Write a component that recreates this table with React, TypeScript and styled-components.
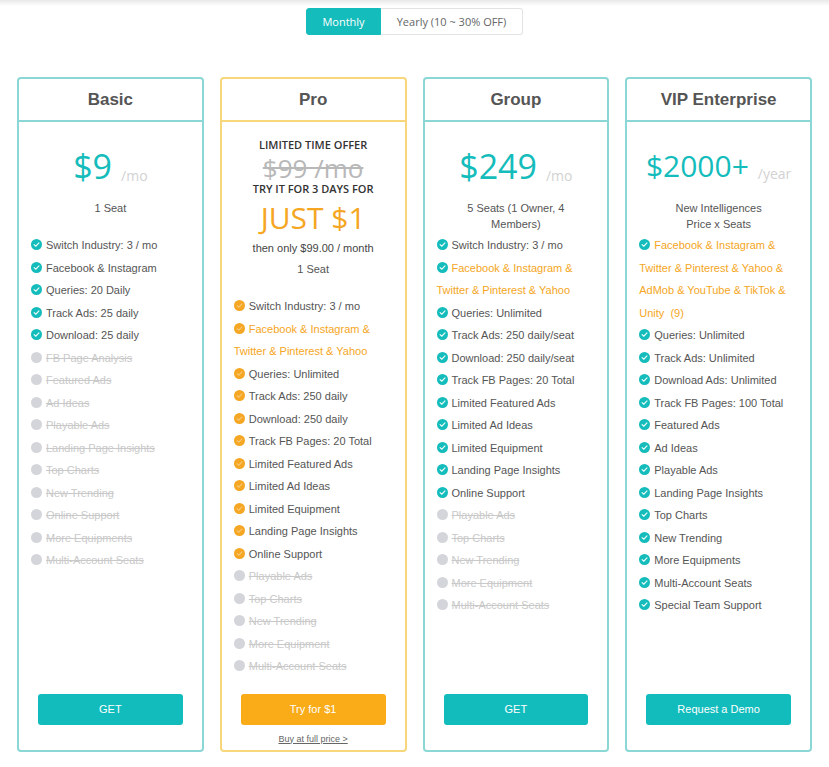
import styled, { createGlobalStyle } from "styled-components";

const GlobalStyle = createGlobalStyle`
  body {
    margin: 0;
    background: #fff;
    font-family: "Liberation Sans", Arial, sans-serif;
    color: #555;
  }
`;

const TEAL = "#14bcbb";
const ORANGE = "#f5a623";

const Page = styled.div`
  width: 829px;
`;

const TopShade = styled.div`
  height: 6px;
  background: linear-gradient(rgba(0, 0, 0, 0.09), rgba(0, 0, 0, 0));
`;

const Toggle = styled.div`
  display: flex;
  justify-content: center;
  margin-top: 2px;
`;

const Segment = styled.button<{ $active?: boolean }>`
  height: 27px;
  padding: 0 15px;
  font-family: "Open Sans", sans-serif;
  font-size: 11px;
  cursor: pointer;
  border: 1px solid ${(p) => (p.$active ? TEAL : "#e3e3e3")};
  background: ${(p) => (p.$active ? TEAL : "#fff")};
  color: ${(p) => (p.$active ? "#fff" : "#666")};
  border-radius: ${(p) => (p.$active ? "3px 0 0 3px" : "0 3px 3px 0")};
  ${(p) => (p.$active ? "width: 75px;" : "width: 142px; border-left: none;")}
`;

const Grid = styled.div`
  display: grid;
  grid-template-columns: repeat(4, 1fr);
  gap: 16px;
  padding: 0 17px;
  margin-top: 42px;
`;

const Card = styled.div<{ $pro?: boolean }>`
  display: flex;
  flex-direction: column;
  border: 2px solid ${(p) => (p.$pro ? "#f8d77c" : "#8ad7d5")};
  border-radius: 4px;
  background: #fff;
`;

const CardHead = styled.div<{ $pro?: boolean }>`
  height: 41px;
  display: flex;
  align-items: center;
  justify-content: center;
  border-bottom: 2px solid ${(p) => (p.$pro ? "#f8d77c" : "#8ad7d5")};
  font-size: 17px;
  font-weight: bold;
  color: #555;
`;

const Body = styled.div`
  flex: 1;
  display: flex;
  flex-direction: column;
  padding-top: 15px;
  text-align: center;
`;

const PriceRow = styled.div`
  margin-top: 9px;
  height: 40px;
  line-height: 40px;
  font-family: "Open Sans", sans-serif;
`;

const Amount = styled.span<{ $size: number }>`
  font-size: ${(p) => p.$size}px;
  color: ${TEAL};
`;

const Per = styled.span`
  font-size: 14px;
  color: #d2d2d2;
  margin-left: 9px;
  position: relative;
  top: 2px;
`;

const OfferLabel = styled.div`
  font-family: "Open Sans", sans-serif;
  font-weight: 600;
  font-size: 11px;
  line-height: 16px;
  color: #333;
`;

const OldPrice = styled.div`
  font-family: "Open Sans", sans-serif;
  font-size: 26px;
  line-height: 24px;
  margin: 3px 0;
  color: #b8b8b8;
  text-decoration: line-through;
`;

const TryLine = styled(OfferLabel)`
  line-height: 12px;
`;

const BigOffer = styled.div`
  font-family: "Open Sans", sans-serif;
  font-size: 30px;
  line-height: 44px;
  margin-top: 1px;
  color: ${ORANGE};
`;

const ThenLine = styled.div`
  font-size: 11px;
  line-height: 16px;
  color: #444;
`;

const SeatNote = styled.div<{ $gap: number }>`
  margin-top: ${(p) => p.$gap}px;
  min-height: 32px;
  font-size: 11px;
  line-height: 16px;
  color: #555;
  padding: 0 30px;
`;

const Features = styled.ul`
  flex: 1;
  list-style: none;
  margin: 2px 0 16px;
  padding: 0 11px 0 12px;
  text-align: left;
`;

const Feature = styled.li<{ $off?: boolean; $hl?: boolean }>`
  font-size: 11px;
  line-height: 22.5px;
  color: ${(p) => (p.$off ? "#c9c9c9" : p.$hl ? ORANGE : "#555")};
  text-decoration: ${(p) => (p.$off ? "line-through" : "none")};
`;

const Dot = styled.svg`
  width: 11px;
  height: 11px;
  vertical-align: -1px;
  margin-right: 4px;
`;

const Footer = styled.div`
  padding: 0 19px;
  text-align: center;
`;

const CTA = styled.button<{ $pro?: boolean }>`
  width: 100%;
  height: 31px;
  border: none;
  border-radius: 3px;
  background: ${(p) => (p.$pro ? "#f9ab18" : "#12bcbc")};
  color: #fff;
  font-family: "Liberation Sans", Arial, sans-serif;
  font-size: 11px;
  cursor: pointer;
`;

const LinkSlot = styled.div`
  height: 25px;
  box-sizing: border-box;
  padding-top: 8px;
  font-size: 9px;
  line-height: 12px;
  a {
    color: #666;
    text-decoration: underline;
  }
`;

type State = "on" | "hl" | "off";
interface Item {
  text: string;
  state?: State;
}

function Icon({ color, off }: { color: string; off?: boolean }) {
  return (
    <Dot viewBox="0 0 12 12">
      <circle cx="6" cy="6" r="6" fill={off ? "#d4d5da" : color} />
      {!off && (
        <path
          d="M3.4 6.2l1.8 1.7 3.5-3.6"
          fill="none"
          stroke="#fff"
          strokeWidth="1.3"
          strokeLinecap="round"
          strokeLinejoin="round"
          opacity={color === ORANGE ? 0.35 : 0.9}
        />
      )}
    </Dot>
  );
}

function FeatureList({ items, color }: { items: Item[]; color: string }) {
  return (
    <Features>
      {items.map((it) => (
        <Feature key={it.text} $off={it.state === "off"} $hl={it.state === "hl"}>
          <Icon color={color} off={it.state === "off"} />
          {it.text}
        </Feature>
      ))}
    </Features>
  );
}

const off = (list: string[]): Item[] => list.map((text) => ({ text, state: "off" }));
const on = (list: string[]): Item[] => list.map((text) => ({ text }));

const basicItems: Item[] = [
  ...on(["Switch Industry: 3 / mo", "Facebook & Instagram", "Queries: 20 Daily", "Track Ads: 25 daily", "Download: 25 daily"]),
  ...off([
    "FB Page Analysis",
    "Featured Ads",
    "Ad Ideas",
    "Playable Ads",
    "Landing Page Insights",
    "Top Charts",
    "New Trending",
    "Online Support",
    "More Equipments",
    "Multi-Account Seats",
  ]),
];

const proItems: Item[] = [
  { text: "Switch Industry: 3 / mo" },
  { text: "Facebook & Instagram & Twitter & Pinterest & Yahoo", state: "hl" },
  ...on([
    "Queries: Unlimited",
    "Track Ads: 250 daily",
    "Download: 250 daily",
    "Track FB Pages: 20 Total",
    "Limited Featured Ads",
    "Limited Ad Ideas",
    "Limited Equipment",
    "Landing Page Insights",
    "Online Support",
  ]),
  ...off(["Playable Ads", "Top Charts", "New Trending", "More Equipment", "Multi-Account Seats"]),
];

const groupItems: Item[] = [
  { text: "Switch Industry: 3 / mo" },
  { text: "Facebook & Instagram & Twitter & Pinterest & Yahoo", state: "hl" },
  ...on([
    "Queries: Unlimited",
    "Track Ads: 250 daily/seat",
    "Download: 250 daily/seat",
    "Track FB Pages: 20 Total",
    "Limited Featured Ads",
    "Limited Ad Ideas",
    "Limited Equipment",
    "Landing Page Insights",
    "Online Support",
  ]),
  ...off(["Playable Ads", "Top Charts", "New Trending", "More Equipment", "Multi-Account Seats"]),
];

const vipItems: Item[] = [
  {
    text: "Facebook & Instagram & Twitter & Pinterest & Yahoo & AdMob & YouTube & TikTok & Unity\u00a0 (9)",
    state: "hl",
  },
  ...on([
    "Queries: Unlimited",
    "Track Ads: Unlimited",
    "Download Ads: Unlimited",
    "Track FB Pages: 100 Total",
    "Featured Ads",
    "Ad Ideas",
    "Playable Ads",
    "Landing Page Insights",
    "Top Charts",
    "New Trending",
    "More Equipments",
    "Multi-Account Seats",
    "Special Team Support",
  ]),
];

export default function App() {
  return (
    <Page>
      <GlobalStyle />
      <TopShade />
      <Toggle>
        <Segment $active>Monthly</Segment>
        <Segment>Yearly (10 ~ 30% OFF)</Segment>
      </Toggle>

      <Grid>
        <Card>
          <CardHead>Basic</CardHead>
          <Body>
            <PriceRow>
              <Amount $size={34}>$9</Amount>
              <Per>/mo</Per>
            </PriceRow>
            <SeatNote $gap={14}>1 Seat</SeatNote>
            <FeatureList items={basicItems} color={TEAL} />
          </Body>
          <Footer>
            <CTA>GET</CTA>
            <LinkSlot />
          </Footer>
        </Card>

        <Card $pro>
          <CardHead $pro>Pro</CardHead>
          <Body>
            <OfferLabel>LIMITED TIME OFFER</OfferLabel>
            <OldPrice>$99 /mo</OldPrice>
            <TryLine>TRY IT FOR 3 DAYS FOR</TryLine>
            <BigOffer>JUST $1</BigOffer>
            <ThenLine>then only $99.00 / month</ThenLine>
            <SeatNote $gap={5}>1 Seat</SeatNote>
            <FeatureList items={proItems} color={ORANGE} />
          </Body>
          <Footer>
            <CTA $pro>Try for $1</CTA>
            <LinkSlot>
              <a href="#">Buy at full price &gt;</a>
            </LinkSlot>
          </Footer>
        </Card>

        <Card>
          <CardHead>Group</CardHead>
          <Body>
            <PriceRow>
              <Amount $size={34}>$249</Amount>
              <Per>/mo</Per>
            </PriceRow>
            <SeatNote $gap={14}>5 Seats (1 Owner, 4 Members)</SeatNote>
            <FeatureList items={groupItems} color={TEAL} />
          </Body>
          <Footer>
            <CTA>GET</CTA>
            <LinkSlot />
          </Footer>
        </Card>

        <Card>
          <CardHead>VIP Enterprise</CardHead>
          <Body>
            <PriceRow>
              <Amount $size={30}>$2000+</Amount>
              <Per>/year</Per>
            </PriceRow>
            <SeatNote $gap={14}>
              New Intelligences
              <br />
              Price x Seats
            </SeatNote>
            <FeatureList items={vipItems} color={TEAL} />
          </Body>
          <Footer>
            <CTA>Request a Demo</CTA>
            <LinkSlot />
          </Footer>
        </Card>
      </Grid>
    </Page>
  );
}
